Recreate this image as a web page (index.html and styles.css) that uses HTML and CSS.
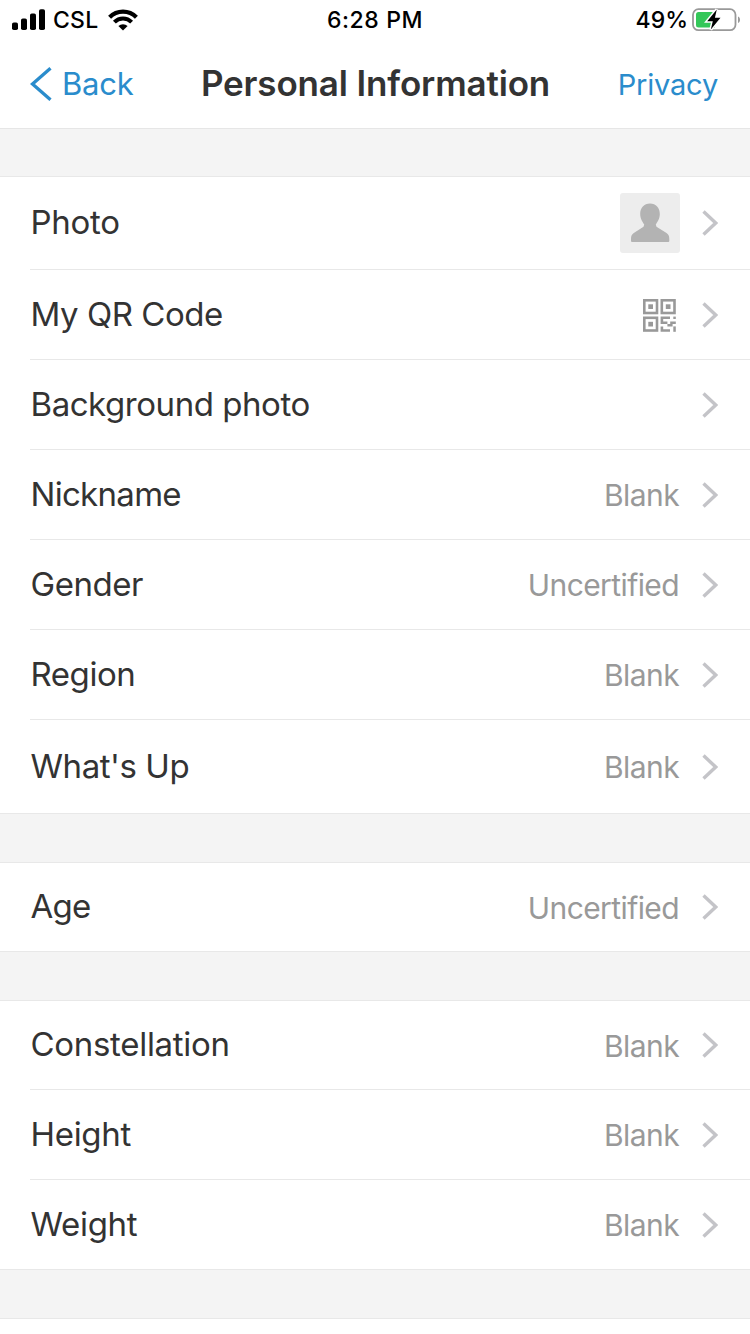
FILE: index.html
```html
<!DOCTYPE html>
<html lang="en">
<head>
  <meta charset="UTF-8">
  <meta name="viewport" content="width=device-width, initial-scale=1.0">
  <title>Personal Information</title>
  <link rel="stylesheet" href="styles.css">
</head>
<body>
  <!-- shared icons -->
  <svg class="sprite" width="0" height="0">
    <symbol id="chevron" viewBox="0 0 16 26">
      <path d="M1.5 1.6 L13.7 13 L1.5 24.4" fill="none" stroke="#c4c4c8" stroke-width="3.4"/>
    </symbol>
  </svg>

  <div class="status-bar">
    <div class="status-left">
      <svg class="signal" width="34" height="22" viewBox="0 0 34 22">
        <rect x="0" y="13.5" width="6" height="7.5" rx="1.8"/>
        <rect x="9" y="9.5" width="6" height="11.5" rx="1.8"/>
        <rect x="18" y="4.5" width="6" height="16.5" rx="1.8"/>
        <rect x="27" y="0.3" width="6" height="20.7" rx="1.8"/>
      </svg>
      <span class="carrier">CSL</span>
      <svg class="wifi" width="30" height="22" viewBox="0 0 30 22">
        <path d="M1.6 8.2 A19 19 0 0 1 28.4 8.2" fill="none" stroke="#000" stroke-width="4.2"/>
        <path d="M6.4 13.2 A12 12 0 0 1 23.6 13.2" fill="none" stroke="#000" stroke-width="4"/>
        <path d="M10.4 17 A6.8 6.8 0 0 1 19.6 17 L15 21.6 Z"/>
      </svg>
    </div>
    <span class="time">6:28 PM</span>
    <div class="status-right">
      <span class="percent">49%</span>
      <svg class="battery" width="50" height="24" viewBox="0 0 50 24">
        <rect x="1" y="1.2" width="42.5" height="21" rx="5.5" fill="none" stroke="#999" stroke-width="1.8"/>
        <path d="M46 8.5 C48.7 9.5 48.7 14 46 15 Z" fill="#999"/>
        <path d="M6.5 4 H23 V19.4 H6.5 Q4 19.4 4 16.9 V6.5 Q4 4 6.5 4 Z" fill="#34c759"/>
        <path d="M24.8 1.5 L15.2 13.2 H20.8 L18.8 21.5 L28.5 9.7 H22.9 Z" stroke="#fff" stroke-width="3" paint-order="stroke"/>
      </svg>
    </div>
  </div>

  <div class="navbar">
    <a class="back">
      <svg width="22" height="34" viewBox="0 0 22 34">
        <path d="M20.5 1.3 L2.5 17 L20.5 32.7" fill="none" stroke="#2a8ccc" stroke-width="3.3"/>
      </svg>
      <span>Back</span>
    </a>
    <h1>Personal Information</h1>
    <a class="privacy">Privacy</a>
  </div>

  <div class="group">
    <div class="row row-photo">
      <span class="label loose">Photo</span>
      <svg class="avatar" width="60" height="60" viewBox="0 0 60 60">
        <rect width="60" height="60" rx="3" fill="#ededed"/>
        <path d="M30 10.5 C36 10.5 39.8 15 39.8 21 C39.8 26 37.5 28.5 35.8 31.5 L36.5 33.8 L46.5 40 C48.7 41.4 49.3 43.3 49.3 46 V48 Q49.3 49 48.3 49 H12 Q11 49 11 48 V46 C11 43.3 11.6 41.4 13.8 40 L23.5 33.8 L24.2 31.5 C22.5 28.5 20.2 26 20.2 21 C20.2 15 24 10.5 30 10.5 Z" fill="#b3b3b3"/>
      </svg>
      <svg class="chevron"><use href="#chevron"/></svg>
    </div>
    <div class="row">
      <span class="label">My QR Code</span>
      <svg class="qr" width="33" height="34" viewBox="0 -1 33 34">
        <g fill="none" stroke="#999" stroke-width="2.6">
          <rect x="1.3" y="1.3" width="12.7" height="12.7"/>
          <rect x="18.8" y="1.3" width="12.7" height="12.7"/>
          <rect x="1.3" y="18.8" width="12.7" height="12.7"/>
        </g>
        <g fill="#999">
          <rect x="5.3" y="5.3" width="4.7" height="4.7"/>
          <rect x="22.8" y="5.3" width="4.7" height="4.7"/>
          <rect x="5.3" y="22.8" width="4.7" height="4.7"/>
          <path d="M17.6 17.6 H27 V20 H20.2 V22.6 H24.4 V25 H17.6 Z"/>
          <path d="M30.3 17.6 H32.8 V20 H30.3 Z"/>
          <path d="M27.2 22.6 H32.8 V25 H29.6 V27.4 H24.4 V25 H27.2 Z"/>
          <path d="M17.6 27.4 H20.2 V30.2 H27 V32.8 H17.6 Z"/>
          <path d="M30.3 27.4 H32.8 V32.8 H30.3 Z"/>
        </g>
      </svg>
      <svg class="chevron"><use href="#chevron"/></svg>
    </div>
    <div class="row">
      <span class="label">Background photo</span>
      <svg class="chevron"><use href="#chevron"/></svg>
    </div>
    <div class="row">
      <span class="label tight">Nickname</span>
      <span class="value">Blank</span>
      <svg class="chevron"><use href="#chevron"/></svg>
    </div>
    <div class="row">
      <span class="label">Gender</span>
      <span class="value">Uncertified</span>
      <svg class="chevron"><use href="#chevron"/></svg>
    </div>
    <div class="row">
      <span class="label">Region</span>
      <span class="value">Blank</span>
      <svg class="chevron"><use href="#chevron"/></svg>
    </div>
    <div class="row row-whatsup">
      <span class="label">What's Up</span>
      <span class="value">Blank</span>
      <svg class="chevron"><use href="#chevron"/></svg>
    </div>
  </div>

  <div class="group">
    <div class="row">
      <span class="label tight">Age</span>
      <span class="value">Uncertified</span>
      <svg class="chevron"><use href="#chevron"/></svg>
    </div>
  </div>

  <div class="group">
    <div class="row">
      <span class="label loose">Constellation</span>
      <span class="value">Blank</span>
      <svg class="chevron"><use href="#chevron"/></svg>
    </div>
    <div class="row">
      <span class="label loose">Height</span>
      <span class="value">Blank</span>
      <svg class="chevron"><use href="#chevron"/></svg>
    </div>
    <div class="row">
      <span class="label loose">Weight</span>
      <span class="value">Blank</span>
      <svg class="chevron"><use href="#chevron"/></svg>
    </div>
  </div>

  <div class="group group-next"></div>
</body>
</html>
```
FILE: styles.css
```css
* {
  box-sizing: border-box;
}
body {
  margin: 0;
  height: 1334px;
  display: flex;
  flex-direction: column;
  overflow: hidden;
  background-color: #f4f4f4;
  color: #333;
  font-family: Inter, "Liberation Sans", sans-serif;
}
.sprite {
  position: absolute;
}

/* status bar */
.status-bar {
  display: grid;
  grid-template-columns: 1fr auto 1fr;
  align-items: center;
  height: 40px;
  padding: 0 8px 0 12px;
  background-color: #fff;
  color: #000;
  font-size: 23px;
  font-weight: 500;
}
.status-left, .status-right {
  display: flex;
  align-items: center;
}
.status-right {
  justify-content: flex-end;
}
.carrier {
  margin-left: 7px;
  letter-spacing: 0.2px;
}
.wifi {
  margin-left: 10px;
}
.time {
  margin-right: 4px;
  letter-spacing: 0.6px;
}
.percent {
  margin-right: 4px;
}

/* navigation bar */
.navbar {
  display: grid;
  grid-template-columns: 1fr auto 1fr;
  align-items: center;
  height: 89px;
  padding: 0 32px 0 30px;
  background-color: #fff;
  border-bottom: 1px solid #e6e6e6;
}
.navbar h1 {
  margin: 0;
  padding: 0 0 2px 3px;
  font-size: 35px;
  font-weight: 600;
  letter-spacing: -0.15px;
}
.back {
  display: flex;
  align-items: center;
  gap: 10px;
  color: #2a8ccc;
  font-size: 31px;
  letter-spacing: -0.2px;
}
.back span {
  padding-bottom: 1px;
}
.privacy {
  color: #2a8ccc;
  font-size: 29px;
  letter-spacing: -0.2px;
  text-align: right;
}

/* setting groups */
.group {
  margin-top: 47px;
  background-color: #fff;
  border-top: 1px solid #e8e8e8;
  border-bottom: 1px solid #e8e8e8;
}
.group + .group {
  margin-top: 48px;
}
.group-next {
  flex: 1;
  border-bottom: none;
}
.row {
  display: flex;
  align-items: center;
  height: 90px;
  margin-left: 30px;
  padding-right: 32px;
  border-bottom: 1px solid #e8e8e8;
}
.row:last-child {
  height: 89px;
  border-bottom: none;
}
.row-photo {
  height: 93px;
}
.row:first-child:not(.row-photo) {
  height: 89px;
}
.row:only-child:not(.row-photo) {
  height: 88px;
}
.row.row-whatsup {
  height: 93px;
}
.label {
  flex: 1;
  padding: 0 0 2px 0.5px;
  font-size: 33px;
  letter-spacing: -0.45px;
}
.label.loose {
  letter-spacing: -0.3px;
}
.label.tight {
  letter-spacing: -0.7px;
}
.value {
  padding: 1px 1px 0 0;
  color: #999;
  font-size: 30px;
  letter-spacing: -0.6px;
}
.chevron {
  width: 16px;
  height: 26px;
  margin-left: 22px;
}
.qr + .chevron {
  margin-left: 26px;
}
```
